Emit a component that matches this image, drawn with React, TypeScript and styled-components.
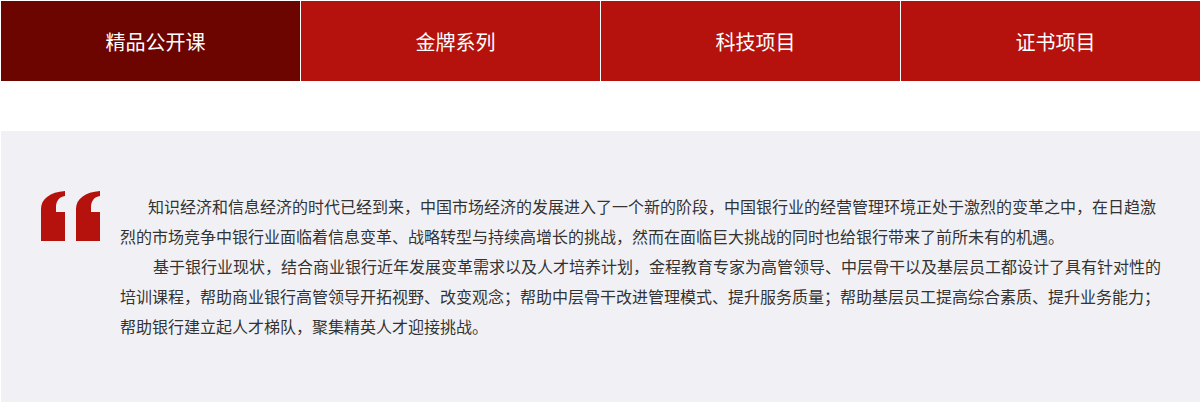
import React from "react";
import styled, { createGlobalStyle } from "styled-components";

const GlobalStyle = createGlobalStyle`
  html, body {
    margin: 0;
    padding: 0;
    background: #fff;
    font-family: "Noto Sans CJK SC", "Liberation Sans", sans-serif;
  }
`;

const Page = styled.div`
  width: 1200px;
  height: 402px;
  padding: 1px 0 0 1px;
  box-sizing: border-box;
  overflow: hidden;
`;

const TabBar = styled.ul`
  display: flex;
  gap: 1px;
  margin: 0;
  padding: 0;
  list-style: none;
  height: 80px;
`;

const Tab = styled.li<{ $active?: boolean }>`
  flex: 1;
  display: flex;
  align-items: center;
  justify-content: center;
  padding-left: 10px;
  background: ${(p) => (p.$active ? "#6c0500" : "#b5120d")};
  color: #fff;
  font-size: 20px;
  cursor: pointer;
`;

const Intro = styled.section`
  margin-top: 50px;
  height: 271px;
  background: #f1f1f5;
  display: flex;
  align-items: flex-start;
  padding: 60px 0 0 40px;
  box-sizing: border-box;
`;

const QuoteMark = styled.svg`
  flex: none;
  width: 79px;
  height: 50px;
`;

const TextBlock = styled.div`
  width: 1050px;
  color: #333;
  font-size: 16px;
  line-height: 30px;
`;

const Para = styled.p<{ $indent: number }>`
  margin: 0;
  text-indent: ${(p) => p.$indent}px;
`;

const tabs = ["精品公开课", "金牌系列", "科技项目", "证书项目"];

// heavy opening quote: square block with a hooked tail
const mark =
  "M0,50 L0,18 C0,8 9,1 24,0 L24,5 C18,6 15,10 15,16 L15,21 L24,21 L24,50 Z";

export default function App() {
  return (
    <Page>
      <GlobalStyle />
      <TabBar>
        {tabs.map((t, i) => (
          <Tab key={t} $active={i === 0}>
            {t}
          </Tab>
        ))}
      </TabBar>
      <Intro>
        <QuoteMark viewBox="0 0 79 50">
          <path d={mark} fill="#b5120d" />
          <path d={mark} fill="#b5120d" transform="translate(35 0)" />
        </QuoteMark>
        <TextBlock>
          <Para $indent={28}>
            知识经济和信息经济的时代已经到来，中国市场经济的发展进入了一个新的阶段，中国银行业的经营管理环境正处于激烈的变革之中，在日趋激烈的市场竞争中银行业面临着信息变革、战略转型与持续高增长的挑战，然而在面临巨大挑战的同时也给银行带来了前所未有的机遇。
          </Para>
          <Para $indent={33}>
            基于银行业现状，结合商业银行近年发展变革需求以及人才培养计划，金程教育专家为高管领导、中层骨干以及基层员工都设计了具有针对性的培训课程，帮助商业银行高管领导开拓视野、改变观念；帮助中层骨干改进管理模式、提升服务质量；帮助基层员工提高综合素质、提升业务能力；帮助银行建立起人才梯队，聚集精英人才迎接挑战。
          </Para>
        </TextBlock>
      </Intro>
    </Page>
  );
}
